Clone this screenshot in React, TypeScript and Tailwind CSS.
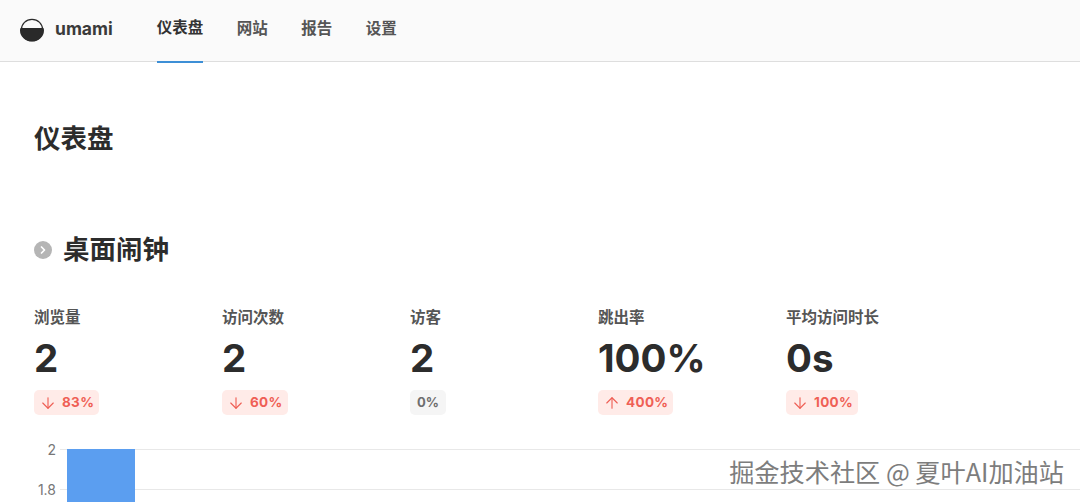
import { ArrowDown, ArrowUp, ChevronRight } from 'lucide-react'

const font = { fontFamily: 'Inter, "Noto Sans CJK SC", sans-serif' }

const metrics = [
  { label: '浏览量', value: '2', change: '83%', dir: 'down' },
  { label: '访问次数', value: '2', change: '60%', dir: 'down' },
  { label: '访客', value: '2', change: '0%', dir: 'none' },
  { label: '跳出率', value: '100%', change: '400%', dir: 'up' },
  { label: '平均访问时长', value: '0s', change: '100%', dir: 'down' },
]

function Logo() {
  return (
    <svg width="24" height="24" viewBox="0 0 24 24" className="shrink-0">
      <circle cx="12" cy="12" r="10.7" fill="none" stroke="#2a2a2a" strokeWidth="1.2" />
      <path d="M0.6 10h22.8c.4 1 .6 1.4.6 2.2a12 11.4 0 0 1-24 0c0-.8.2-1.2.6-2.2z" fill="#2a2a2a" />
    </svg>
  )
}

export default function App() {
  return (
    <div className="relative h-[502px] w-[1080px] overflow-hidden bg-white text-[#2c2c2c]" style={font}>
      {/* Nav */}
      <header className="flex h-[62px] items-stretch border-b border-[#dedede] bg-[#fafafa] pl-5">
        <div className="flex items-center gap-[11px] pb-[2px]">
          <Logo />
          <span className="text-[17.5px] font-bold text-[#3a3a3a]">umami</span>
        </div>
        <nav className="ml-[44px] flex gap-[33.5px] text-[15.5px] font-bold text-[#555]">
          <span className="-mb-[2px] flex items-center border-b-2 border-[#3d8fd6] pb-[6px] text-[#333]">仪表盘</span>
          <span className="flex items-center pb-[4px]">网站</span>
          <span className="flex items-center pb-[4px]">报告</span>
          <span className="flex items-center pb-[4px]">设置</span>
        </nav>
      </header>

      <main className="pl-[34px]">
        <h1 className="mt-[57px] text-[26.5px] leading-[38px] font-bold">仪表盘</h1>

        <div className="mt-[74px] flex items-center gap-[11px]">
          <span className="flex h-[18px] w-[18px] items-center justify-center rounded-full bg-[#b5b5b5]">
            <ChevronRight size={12} strokeWidth={3.5} className="text-white" />
          </span>
          <h2 className="-translate-y-[1px] text-[26.5px] leading-[38px] font-bold">桌面闹钟</h2>
        </div>

        {/* Metrics */}
        <div className="mt-[38px] flex">
          {metrics.map(m => (
            <div key={m.label} className="w-[188px]">
              <div className="text-[15.5px] leading-[22px] font-bold text-[#555]">{m.label}</div>
              <div className="mt-[4px] text-[38.5px] leading-[50px] font-bold">{m.value}</div>
              <div className="mt-[7px] flex">
                <span
                  className={
                    m.dir === 'none'
                      ? 'flex h-[25px] items-center rounded-[5px] bg-[#f5f5f5] px-[7px] text-[13px] font-bold text-[#6e6e6e]'
                      : 'flex h-[25px] items-center gap-[5px] rounded-[5px] bg-[#ffebe8] px-[5px] text-[13.5px] font-bold tracking-wide text-[#ef5f55]'
                  }
                >
                  {m.dir === 'down' && <ArrowDown size={18} strokeWidth={1.5} />}
                  {m.dir === 'up' && <ArrowUp size={18} strokeWidth={1.5} />}
                  {m.change}
                </span>
              </div>
            </div>
          ))}
        </div>

        {/* Chart */}
        <div className="relative mt-[34px] text-sm text-[#777]">
          <div className="flex h-10 items-start">
            <span className="w-[22px] -translate-y-[9px] text-right">2</span>
            <div className="ml-[4px] flex-1 border-t border-[#e8e8e8]" />
          </div>
          <div className="flex h-10 items-start">
            <span className="w-[22px] -translate-y-[9px] text-right">1.8</span>
            <div className="ml-[4px] flex-1 border-t border-[#e8e8e8]" />
          </div>
          <div className="absolute top-0 left-[33px] h-20 w-[68px] bg-[#5b9ef0]" />
        </div>
      </main>

      {/* Watermark */}
      <div
        className="absolute right-[16px] bottom-[16px] text-[25.2px] leading-[30px] text-[#7d7d7d]"
        style={{ textShadow: '1px 1px 1px #fff, -1px -1px 1px #fff, 1px -1px 1px #fff, -1px 1px 1px #fff', fontFamily: '"Noto Sans CJK SC", sans-serif' }}
      >
        掘金技术社区 @ 夏叶AI加油站
      </div>
    </div>
  )
}
